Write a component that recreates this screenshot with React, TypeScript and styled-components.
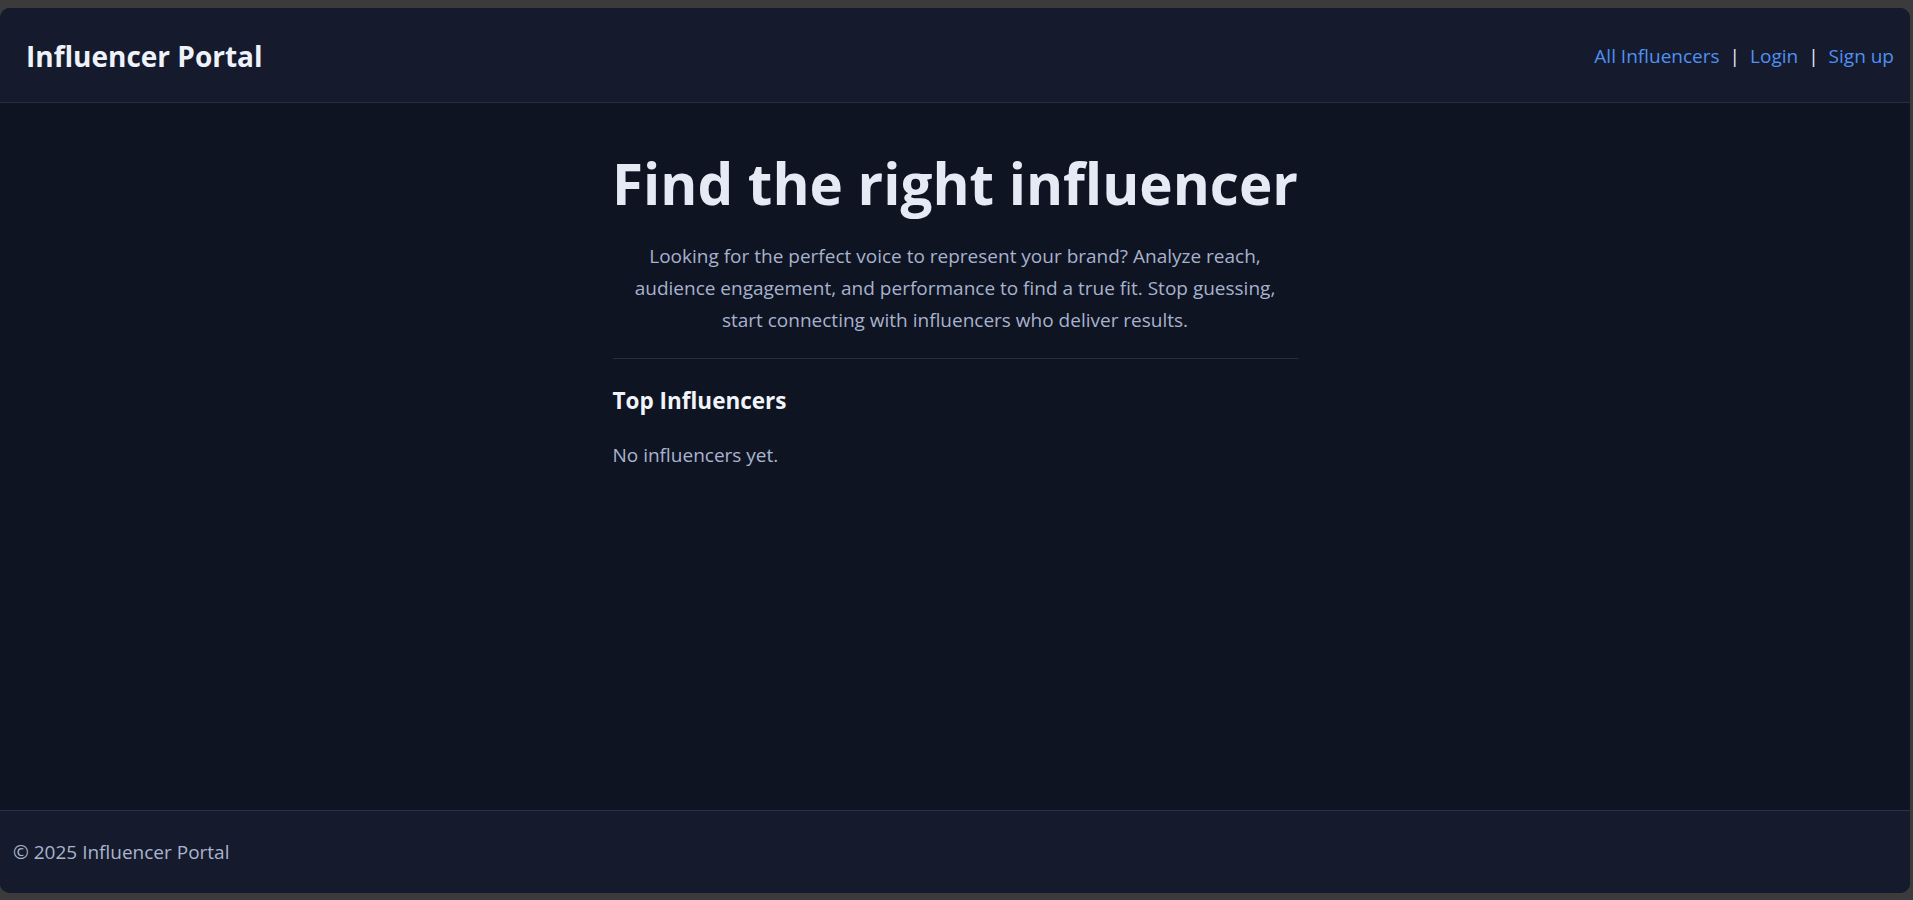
import React from 'react';
import styled, { createGlobalStyle } from 'styled-components';

const GlobalStyle = createGlobalStyle`
  html, body {
    margin: 0;
    padding: 0;
    background: #3b3b3b;
  }
  body {
    font-family: "Open Sans", "Noto Sans", sans-serif;
  }
`;

const Backdrop = styled.div`
  padding: 8px 3px 7px 0;
  height: 900px;
  box-sizing: border-box;
`;

const Window = styled.div`
  height: 100%;
  display: flex;
  flex-direction: column;
  border-radius: 10px;
  overflow: hidden;
  background: #0f1422;
`;

const Header = styled.header`
  height: 92px;
  display: flex;
  align-items: center;
  justify-content: space-between;
  padding: 2px 16px 0 26px;
  background: #151b2c;
  border-bottom: 1px solid #262f48;
  flex-shrink: 0;
`;

const Brand = styled.div`
  font-size: 28px;
  font-weight: 700;
  color: #eef2fa;
`;

const Nav = styled.nav`
  display: flex;
  align-items: center;
  gap: 10px;
  font-size: 19px;
`;

const NavLink = styled.a`
  color: #4f90f2;
  text-decoration: none;
`;

const Sep = styled.span`
  color: #e8ecf4;
`;

const Main = styled.main`
  flex: 1;
  display: flex;
  justify-content: center;
`;

const Content = styled.div`
  width: 685px;
  padding-top: 44px;
`;

const Title = styled.h1`
  margin: 0 -20px;
  text-align: center;
  white-space: nowrap;
  font-size: 56.5px;
  line-height: 1.3;
  font-weight: 700;
  color: #e6eaf5;
`;

const Lead = styled.p`
  margin: 20px 0 0;
  text-align: center;
  font-size: 19px;
  line-height: 32px;
  color: #a7b2cd;
`;

const Divider = styled.hr`
  margin: 22px 0 0;
  border: none;
  border-top: 1px solid #262e42;
`;

const SectionTitle = styled.h2`
  margin: 26px 0 0;
  font-size: 22.5px;
  font-weight: 700;
  color: #f1f4fa;
`;

const Empty = styled.p`
  margin: 26px 0 0;
  font-size: 19px;
  color: #a9b4ce;
`;

const Footer = styled.footer`
  height: 82px;
  display: flex;
  align-items: center;
  padding: 0 13px;
  background: #151b2c;
  border-top: 1px solid #283150;
  flex-shrink: 0;
  font-size: 19px;
  color: #a9b4ce;
`;

const App: React.FC = () => {
  return (
    <>
      <GlobalStyle />
      <Backdrop>
        <Window>
          <Header>
            <Brand>Influencer Portal</Brand>
            <Nav>
              <NavLink href="#">All Influencers</NavLink>
              <Sep>|</Sep>
              <NavLink href="#">Login</NavLink>
              <Sep>|</Sep>
              <NavLink href="#">Sign up</NavLink>
            </Nav>
          </Header>
          <Main>
            <Content>
              <Title>Find the right influencer</Title>
              <Lead>
                Looking for the perfect voice to represent your brand? Analyze reach,
                <br />
                audience engagement, and performance to find a true fit. Stop guessing,
                <br />
                start connecting with influencers who deliver results.
              </Lead>
              <Divider />
              <SectionTitle>Top Influencers</SectionTitle>
              <Empty>No influencers yet.</Empty>
            </Content>
          </Main>
          <Footer>© 2025 Influencer Portal</Footer>
        </Window>
      </Backdrop>
    </>
  );
};

export default App;
